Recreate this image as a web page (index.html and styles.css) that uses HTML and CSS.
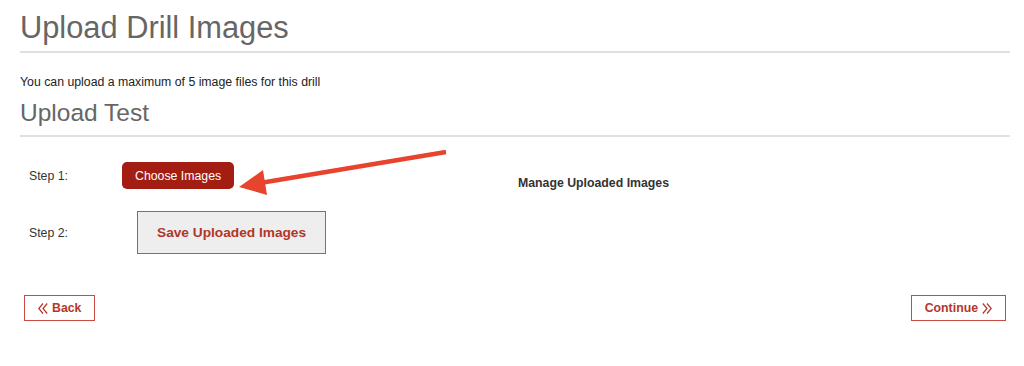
FILE: index.html
```html
<!DOCTYPE html>
<html lang="en">
<head>
    <meta charset="UTF-8">
    <title>Upload Drill Images</title>
    <link rel="stylesheet" href="styles.css">
</head>
<body>
    <div class="page">
        <h1>Upload Drill Images</h1>
        <p class="note">You can upload a maximum of 5 image files for this drill</p>
        <h2>Upload Test</h2>

        <div class="steps">
            <div class="step-label">Step 1:</div>
            <div><button class="btn-choose">Choose Images</button></div>
            <div class="manage">Manage Uploaded Images</div>

            <div class="step-label">Step 2:</div>
            <div><button class="btn-save">Save Uploaded Images</button></div>
            <div></div>
        </div>

        <div class="nav">
            <button class="btn-nav">
                <svg width="10" height="11" viewBox="0 0 10 11"><path d="M5 0.5 L0.8 5.5 L5 10.5 M9.2 0.5 L5 5.5 L9.2 10.5" fill="none" stroke="#b5362c" stroke-width="1.2"/></svg>
                Back
            </button>
            <button class="btn-nav">
                Continue
                <svg width="10" height="11" viewBox="0 0 10 11"><path d="M0.8 0.5 L5 5.5 L0.8 10.5 M5 0.5 L9.2 5.5 L5 10.5" fill="none" stroke="#b5362c" stroke-width="1.2"/></svg>
            </button>
        </div>

        <!-- annotation arrow drawn over the page -->
        <svg class="arrow" width="1024" height="366" viewBox="0 0 1024 366">
            <line x1="446" y1="141" x2="260" y2="172" stroke="#e8432c" stroke-width="4.5"/>
            <polygon points="239,176 263,159 267,184" fill="#e8432c"/>
        </svg>
    </div>
</body>
</html>
```

FILE: styles.css
```css
body {
    margin: 0;
    font-family: "Liberation Sans", Arial, sans-serif;
    color: #333;
    background: #fff;
}
.page {
    position: relative;
    padding: 0 14px 0 20px;
    height: 366px;
    box-sizing: border-box;
}
h1 {
    margin: 11px 0 0;
    padding-bottom: 6px;
    font-size: 30.8px;
    line-height: 34px;
    font-weight: normal;
    color: #666;
    border-bottom: 2px solid #e0e0e0;
}
.note {
    margin: 22px 0 0;
    font-size: 12.3px;
    line-height: 15px;
    color: #222;
}
h2 {
    margin: 9px 0 0;
    padding-bottom: 8px;
    font-size: 24.5px;
    line-height: 28px;
    font-weight: normal;
    color: #666;
    border-bottom: 2px solid #e0e0e0;
}
.steps {
    display: grid;
    grid-template-columns: 93px 396px 1fr;
    row-gap: 22px;
    margin-top: 25px;
    padding-left: 9px;
    align-items: center;
}
.step-label {
    font-size: 12.3px;
    color: #333;
}
button {
    font-family: "Liberation Sans", Arial, sans-serif;
    cursor: pointer;
}
.btn-choose {
    display: block;
    height: 27px;
    padding: 0 13px;
    font-size: 12.3px;
    color: #fff;
    background-color: #a31d13;
    border: none;
    border-radius: 5px;
}
.btn-save {
    display: block;
    margin-left: 15px;
    height: 43px;
    padding: 0 19px;
    font-size: 13.7px;
    font-weight: bold;
    color: #b0362c;
    background-color: #eeeeee;
    border: 1px solid #cc5048;
}
.manage {
    align-self: start;
    margin-top: 15px;
    font-size: 12.3px;
    line-height: 12px;
    font-weight: bold;
    color: #333;
}
.nav {
    display: flex;
    justify-content: space-between;
    margin-top: 41px;
}
.btn-nav {
    display: flex;
    align-items: center;
    gap: 4px;
    margin: 0 4px;
    height: 26px;
    padding: 0 13px;
    font-size: 12.3px;
    font-weight: bold;
    color: #b5362c;
    background: #fff;
    border: 1px solid #cc4a42;
}
.arrow {
    position: absolute;
    left: 0;
    top: 0;
    pointer-events: none;
}
```
